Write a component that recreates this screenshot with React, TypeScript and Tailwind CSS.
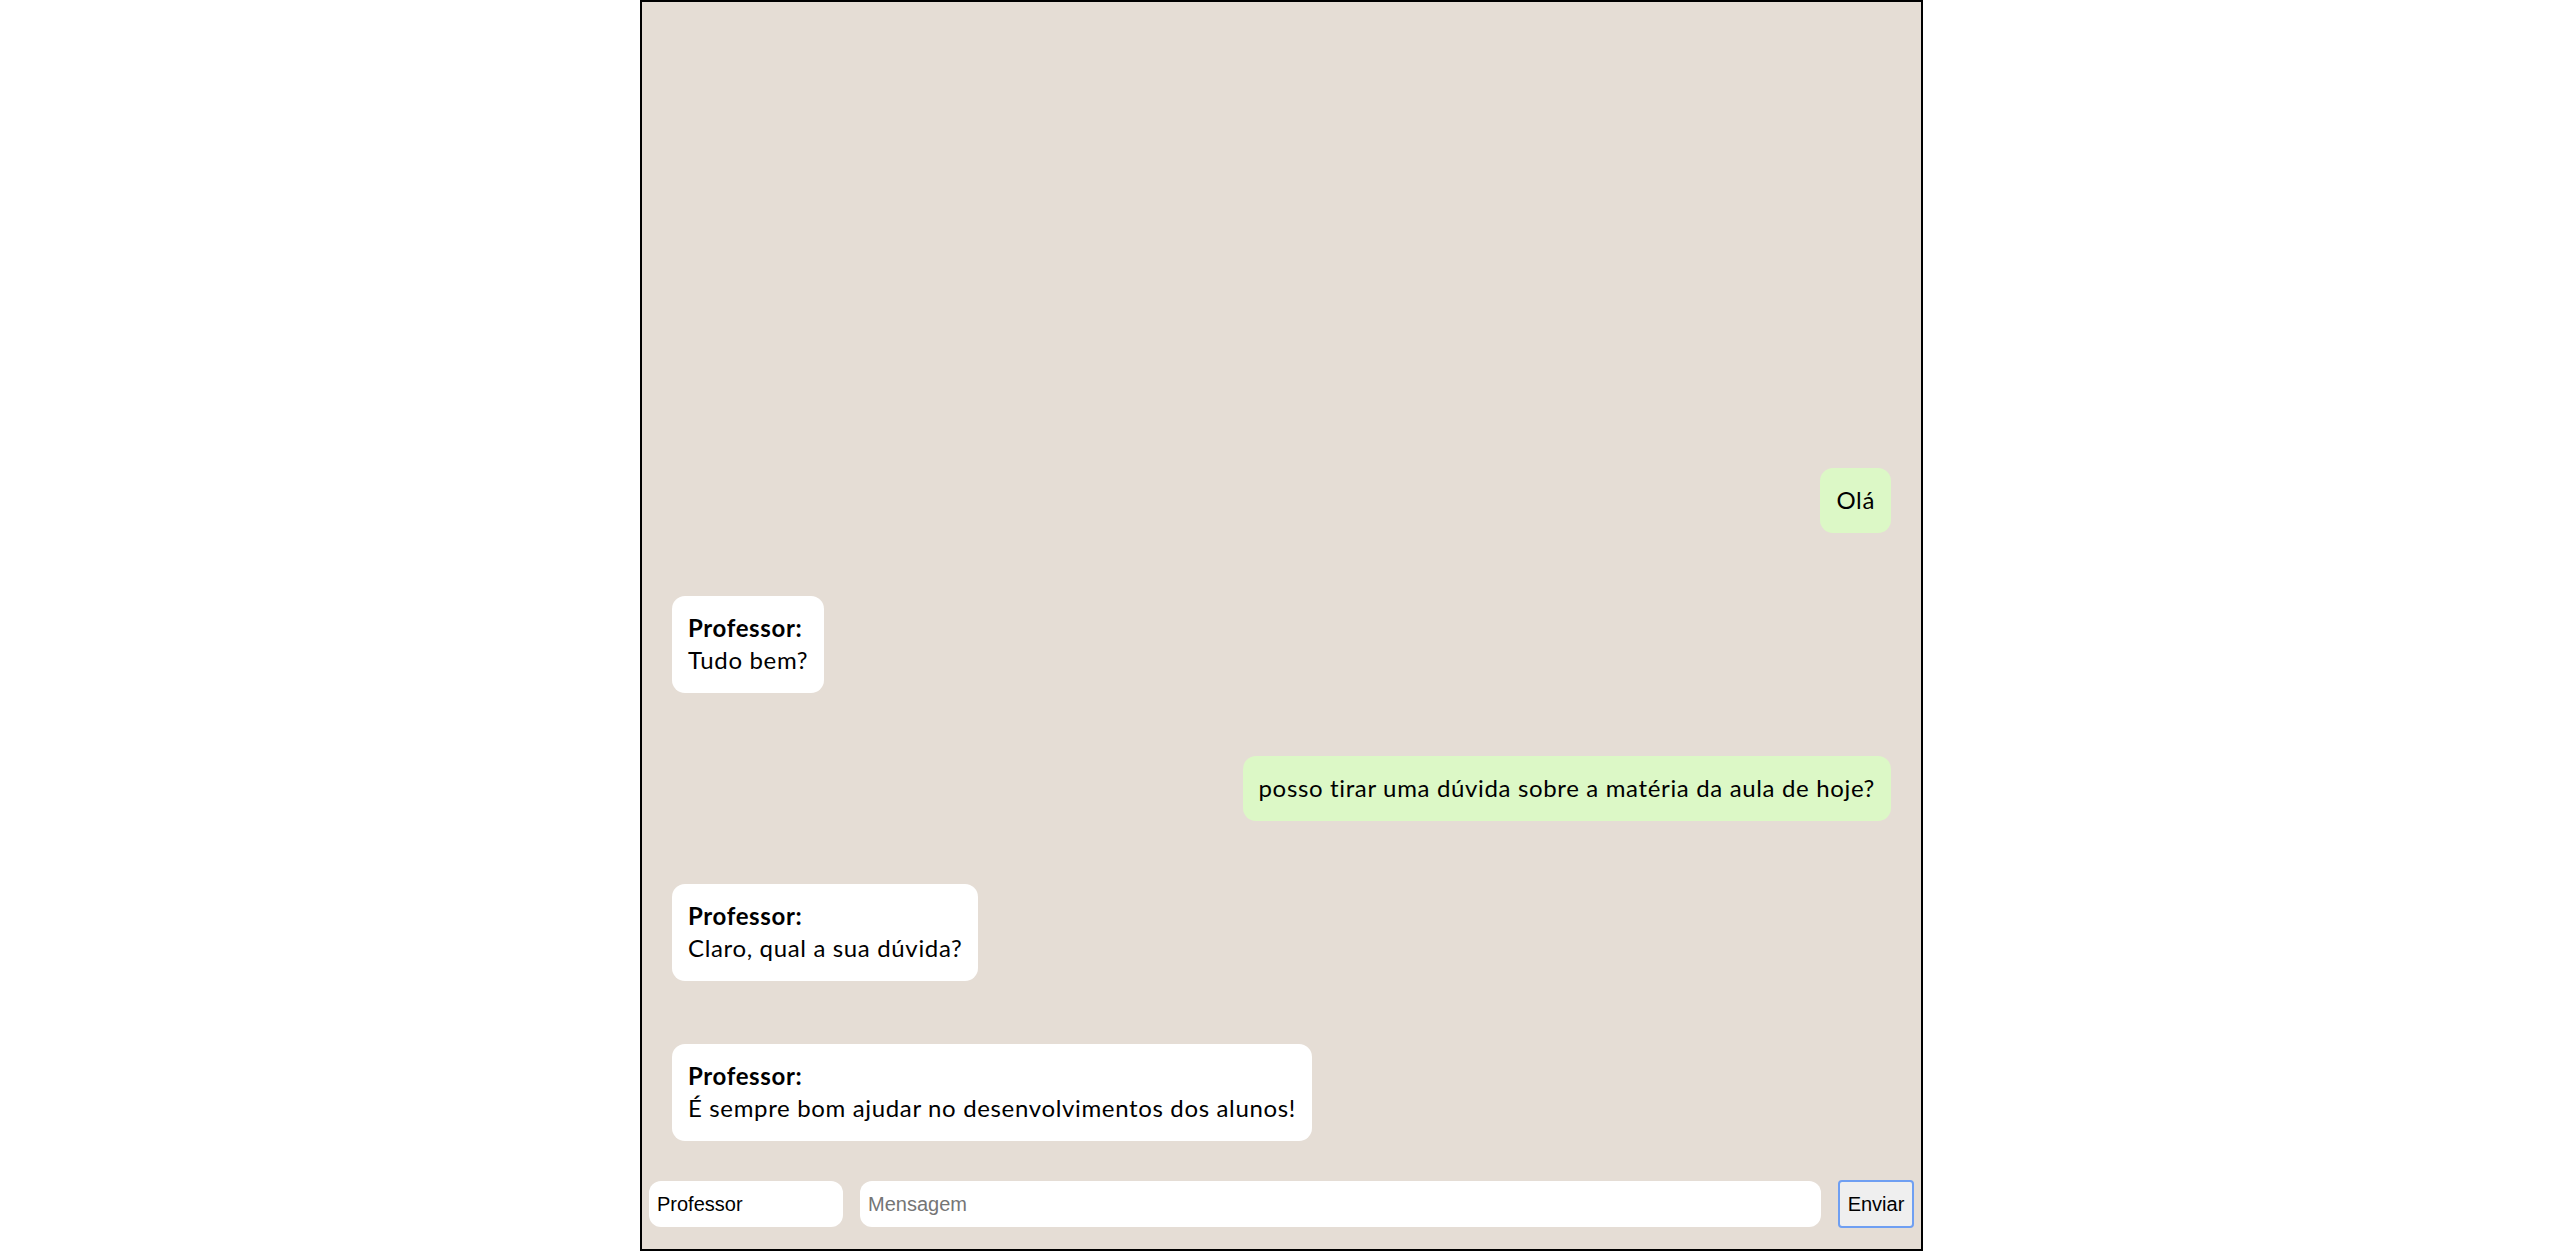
import { useState } from "react";
import clsx from "clsx";

type Message = {
  from: "me" | "professor";
  text: string;
};

const messages: Message[] = [
  { from: "me", text: "Olá" },
  { from: "professor", text: "Tudo bem?" },
  { from: "me", text: "posso tirar uma dúvida sobre a matéria da aula de hoje?" },
  { from: "professor", text: "Claro, qual a sua dúvida?" },
  { from: "professor", text: "É sempre bom ajudar no desenvolvimentos dos alunos!" },
];

export default function App() {
  const [name, setName] = useState("Professor");
  const [text, setText] = useState("");

  return (
    <div className="min-h-screen w-full bg-white">
      <div className="ml-[640px] flex h-[1251px] w-[1283px] flex-col border-2 border-black bg-[#e5ddd5]">
        <div className="flex flex-1 flex-col justify-end gap-[63px] px-[30px] pb-[39px]">
          {messages.map((m, i) => (
            <Bubble key={i} message={m} />
          ))}
        </div>
        <form
          className="flex items-center gap-[17px] px-[7px] pb-[21px]"
          onSubmit={(e) => e.preventDefault()}
        >
          <input
            value={name}
            onChange={(e) => setName(e.target.value)}
            className="h-[46px] w-[194px] rounded-[12px] bg-white px-[8px] font-['Liberation_Sans',Arial,sans-serif] text-[20px] text-black outline-none"
          />
          <input
            value={text}
            onChange={(e) => setText(e.target.value)}
            placeholder="Mensagem"
            className="h-[46px] flex-1 rounded-[12px] bg-white px-[8px] font-['Liberation_Sans',Arial,sans-serif] text-[20px] text-black outline-none placeholder:text-[#757575]"
          />
          <button
            type="submit"
            className="h-[48px] w-[76px] rounded-[4px] border-2 border-[#6f9ff2] bg-[#efefef] font-['Liberation_Sans',Arial,sans-serif] text-[20px] text-black"
          >
            Enviar
          </button>
        </form>
      </div>
    </div>
  );
}

function Bubble({ message }: { message: Message }) {
  const mine = message.from === "me";
  return (
    <div className={clsx("flex", mine ? "justify-end" : "justify-start")}>
      <div
        className={clsx(
          "rounded-[13px] px-4 pb-[17px] pt-4 font-['Lato','Noto_Sans',sans-serif] text-[24px] leading-[32px] tracking-[0.65px] text-black",
          mine ? "bg-[#dcf8c6]" : "bg-white"
        )}
      >
        {!mine && <div className="font-bold">Professor:</div>}
        <div>{message.text}</div>
      </div>
    </div>
  );
}
